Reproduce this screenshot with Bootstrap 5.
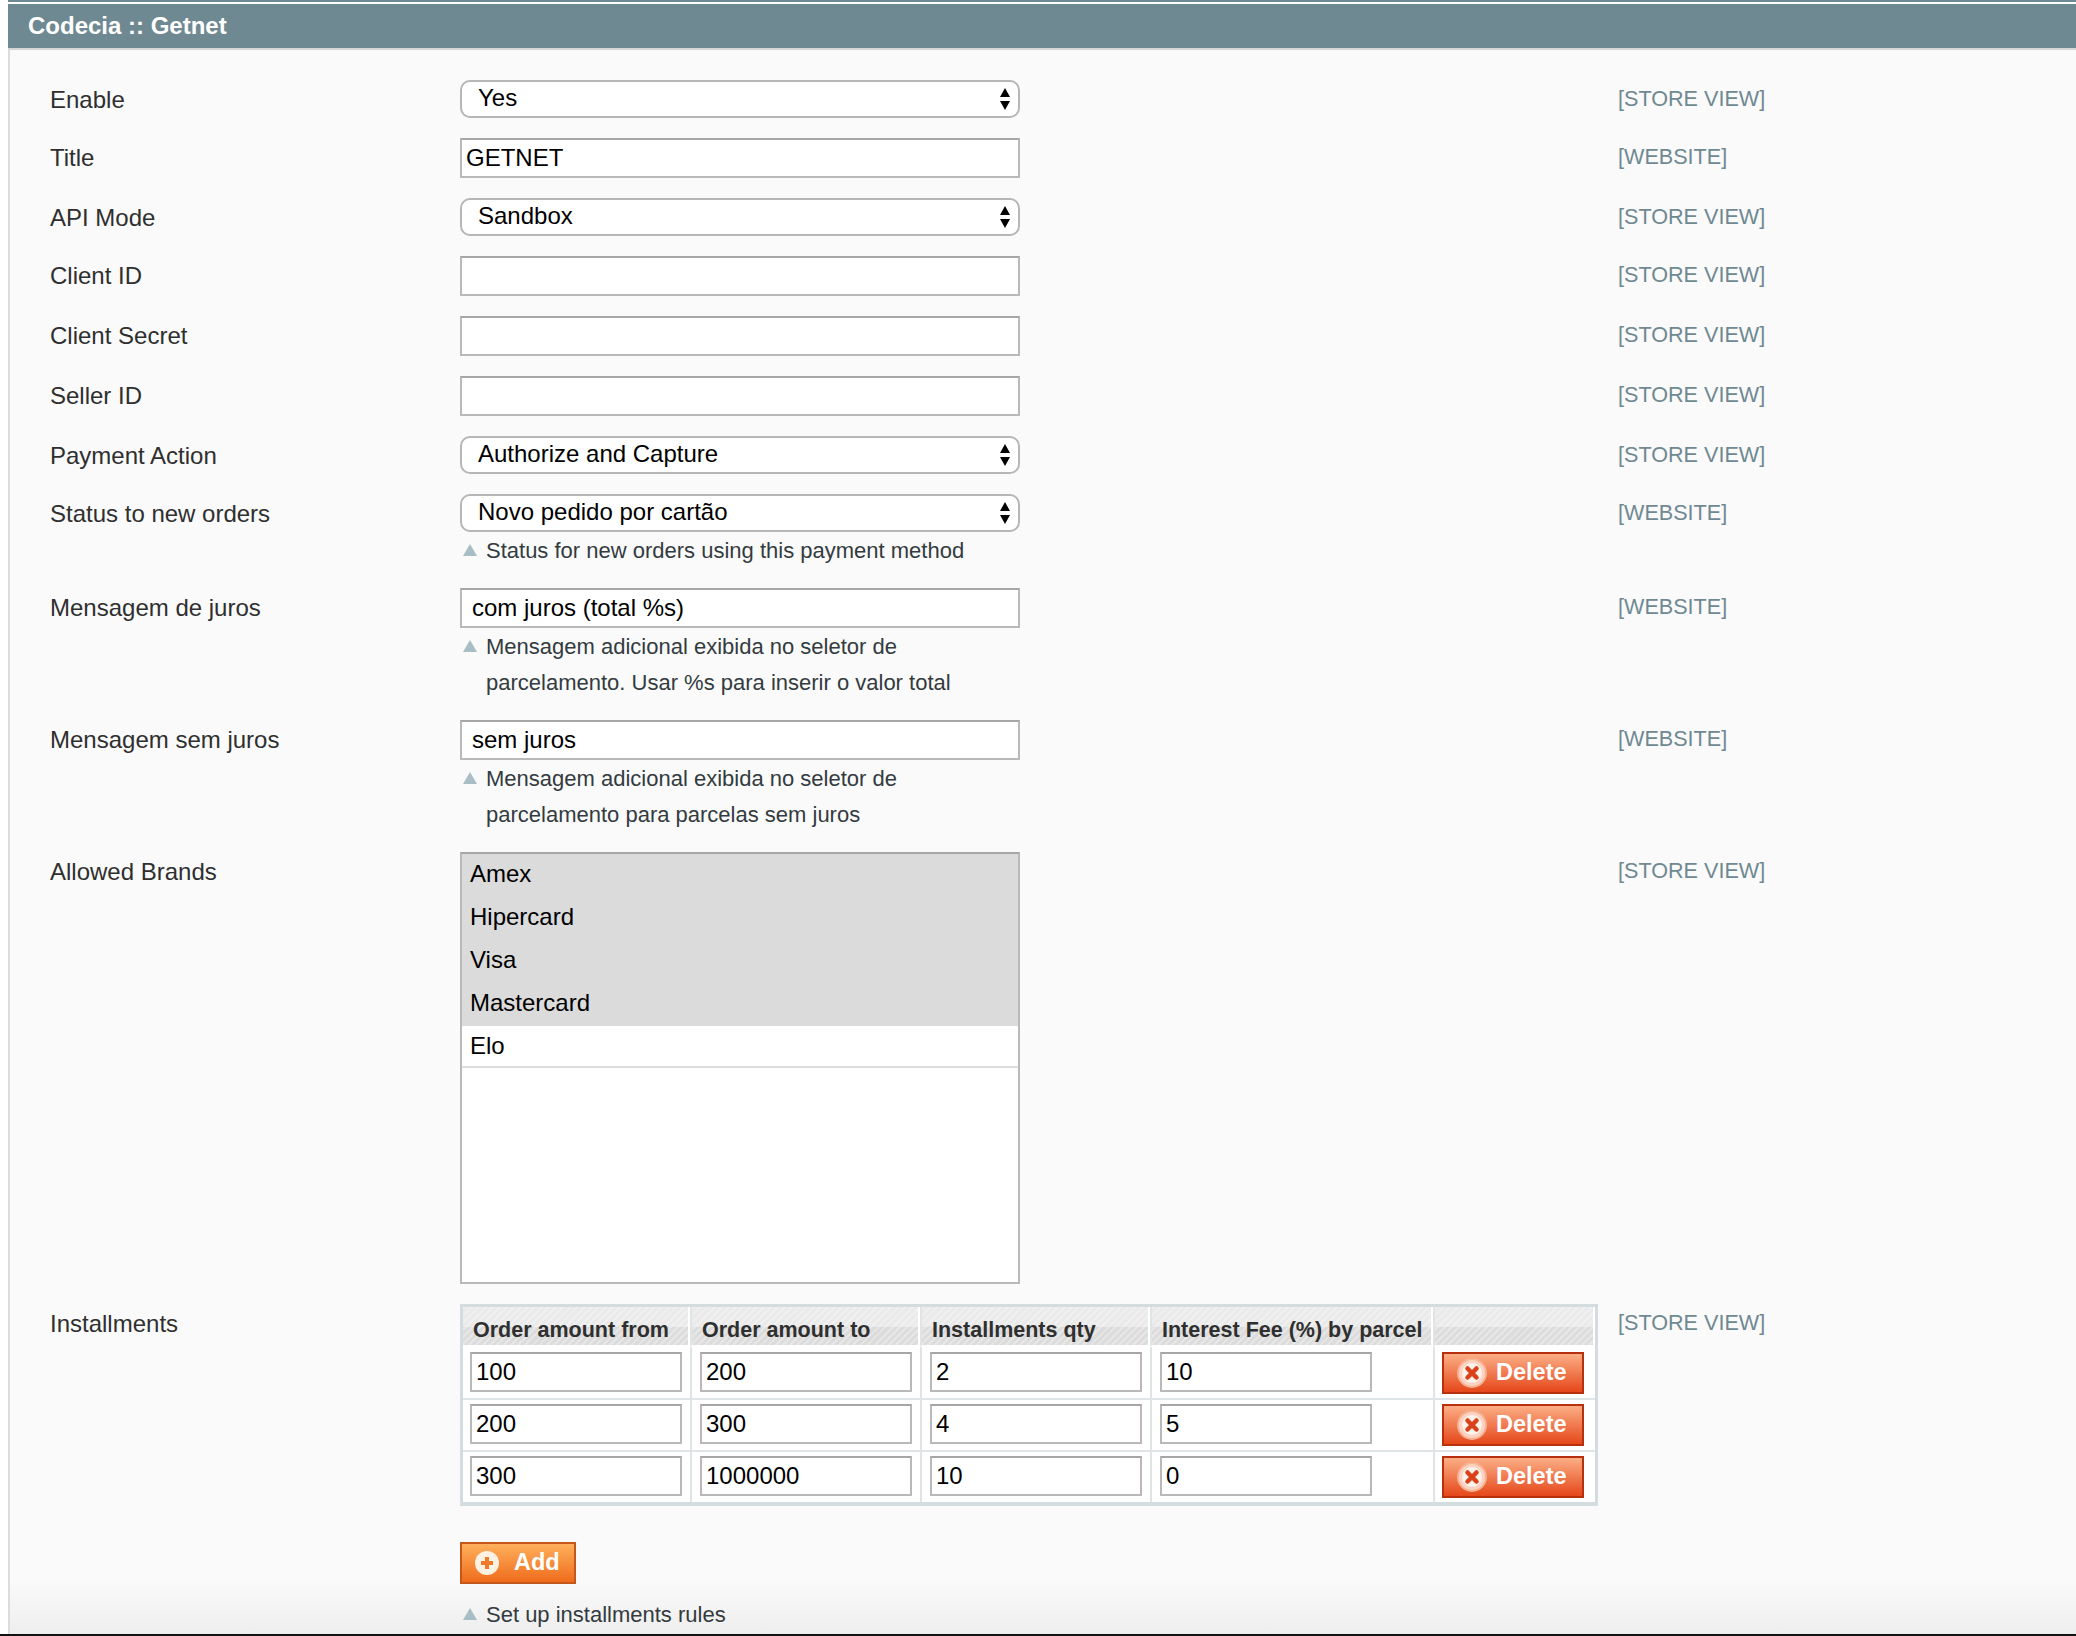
<!DOCTYPE html>
<html lang="pt">
<head>
<meta charset="utf-8">
<title>Codecia :: Getnet</title>
<link href="https://cdn.jsdelivr.net/npm/bootstrap@5.3.0/dist/css/bootstrap.min.css" rel="stylesheet">
<style>
html,body{height:100%;margin:0;background:#fff;font-family:"Liberation Sans",Arial,sans-serif;overflow:hidden}
.shell{height:1636px;padding-left:8px;display:flex;flex-direction:column;border-bottom:2px solid #111}
.topline{height:2px;background:#6f8992;margin-bottom:2px;flex:none}
.panel-head{height:44px;background:#6f8992;color:#fff;font-weight:700;font-size:24px;line-height:44px;padding-left:20px;flex:none}
.panel-body{flex:1 1 auto;min-height:0;background:linear-gradient(#fafafa 0,#fafafa 1530px,#eeeeee 100%);border-top:2px solid #d6d6d6;border-left:2px solid #dcdcdc;padding-top:30px}
.cfg-row{display:flex;margin-bottom:20px}
.cfg-label{width:450px;flex:none;padding-left:40px;font-size:24px;color:#2f2f2f}
.cfg-value{width:1138px;flex:none}
.cfg-scope{margin-left:20px;font-size:21.6px;line-height:38px;height:38px;color:#6f8992;white-space:nowrap}
.h-sel{line-height:40px;height:38px}
.h-inp{line-height:40px}
.ctl{display:flex;align-items:center;width:560px;font-size:24px;color:#000;background:#fff}
.ctl-sel{height:38px;border:2px solid #b6b6b6;border-radius:10px;padding:0 7px 2px 16px;justify-content:space-between}
.ctl-inp{height:40px;border:2px solid #b9b9b9;border-top-color:#a6a6a6;padding:0 10px}
.pad-s{padding-left:4px}
.arrows{width:12px;height:24px;flex:none;margin-top:2px;fill:#000}
.hint{display:flex;width:559px;font-size:22px;line-height:36px;color:#333b40;padding-top:1px;margin-bottom:-1px}
.hint svg{width:14px;height:12px;flex:none;margin:11px 9px 0 3px;fill:#a9bdc5}
.listbox{width:560px;height:432px;border:2px solid #b9b9b9;border-top-color:#a6a6a6;background:#fff;font-size:24px;color:#000}
.opt{height:43px;line-height:39px;padding-left:8px}
.opt-on{background:#dbdbdb}
.opt-last{height:42px;line-height:40px;border-bottom:2px solid #dcdcdc}
.grid-tbl{width:1138px;table-layout:fixed;border-collapse:separate;border-spacing:0;border:3px solid #d3dcde;border-bottom-width:4px;background:#fff}
.grid-tbl th{height:40px;padding:7px 0 0 10px;font-size:21.5px;line-height:28px;font-weight:700;color:#2f2f2f;white-space:nowrap;border-right:2px solid #fff;border-bottom:2px solid #fff;border-left:2px solid #dfe5e6;background:repeating-linear-gradient(135deg,rgba(255,255,255,.3) 0 2px,rgba(255,255,255,0) 2px 5px),linear-gradient(#eaeaea 0,#eaeaea 20px,#dcdcdc 20px,#dcdcdc 100%);vertical-align:middle}
.grid-tbl th:first-child{border-left:0;padding-left:10px}
.grid-tbl td{height:52px;padding:0;border-left:2px solid #dfe5e6;border-top:2px solid #dfe5e6;vertical-align:top}
.grid-tbl td:first-child{border-left:0}
.grid-tbl tbody tr:first-child td{border-top:0;height:51px}
.cell-in{margin:4px 0 0 8px;width:212px;height:40px;border:2px solid #b9b9b9;border-top-color:#a6a6a6;background:#fff;font-size:24px;line-height:36px;color:#000;padding-left:4px}
td:first-child .cell-in{margin-left:7px}
.tbl-1 .cell-in{margin-top:5px}
.act{display:flex;align-items:center;border:2px solid #b8300e;font-weight:700;font-size:23.5px;color:#fff;padding:0;height:42px}
.act-del{width:142px;margin:4px 0 0 7px;background:linear-gradient(#fcae86,#e5471a);padding-left:13px}
.tbl-1 .act-del{margin-top:5px}
.act-add{width:116px;margin-top:36px;background:linear-gradient(#feb05c,#ef6c1c);border-color:#c4581a;padding-left:13px}
.act svg{width:30px;height:30px;flex:none;margin-right:9px}
.act-add svg{width:24px;height:24px;margin-right:15px}
.hint-last{margin-top:12px}
</style>
</head>
<body>
<div class="shell">
  <div class="topline"></div>
  <div class="panel-head">Codecia :: Getnet</div>
  <div class="panel-body">

    <div class="cfg-row">
      <div class="cfg-label h-sel">Enable</div>
      <div class="cfg-value"><div class="ctl ctl-sel"><span>Yes</span><svg class="arrows" viewBox="0 0 12 24"><path d="M6 1 11 10H1zM1 14H11L6 23z"/></svg></div></div>
      <div class="cfg-scope">[STORE VIEW]</div>
    </div>
    <div class="cfg-row">
      <div class="cfg-label h-inp">Title</div>
      <div class="cfg-value"><div class="ctl ctl-inp pad-s">GETNET</div></div>
      <div class="cfg-scope">[WEBSITE]</div>
    </div>
    <div class="cfg-row">
      <div class="cfg-label h-sel">API Mode</div>
      <div class="cfg-value"><div class="ctl ctl-sel"><span>Sandbox</span><svg class="arrows" viewBox="0 0 12 24"><path d="M6 1 11 10H1zM1 14H11L6 23z"/></svg></div></div>
      <div class="cfg-scope">[STORE VIEW]</div>
    </div>
    <div class="cfg-row">
      <div class="cfg-label h-inp">Client ID</div>
      <div class="cfg-value"><div class="ctl ctl-inp"></div></div>
      <div class="cfg-scope">[STORE VIEW]</div>
    </div>
    <div class="cfg-row">
      <div class="cfg-label h-inp">Client Secret</div>
      <div class="cfg-value"><div class="ctl ctl-inp"></div></div>
      <div class="cfg-scope">[STORE VIEW]</div>
    </div>
    <div class="cfg-row">
      <div class="cfg-label h-inp">Seller ID</div>
      <div class="cfg-value"><div class="ctl ctl-inp"></div></div>
      <div class="cfg-scope">[STORE VIEW]</div>
    </div>
    <div class="cfg-row">
      <div class="cfg-label h-sel">Payment Action</div>
      <div class="cfg-value"><div class="ctl ctl-sel"><span>Authorize and Capture</span><svg class="arrows" viewBox="0 0 12 24"><path d="M6 1 11 10H1zM1 14H11L6 23z"/></svg></div></div>
      <div class="cfg-scope">[STORE VIEW]</div>
    </div>
    <div class="cfg-row">
      <div class="cfg-label h-sel">Status to new orders</div>
      <div class="cfg-value">
        <div class="ctl ctl-sel"><span>Novo pedido por cartão</span><svg class="arrows" viewBox="0 0 12 24"><path d="M6 1 11 10H1zM1 14H11L6 23z"/></svg></div>
        <div class="hint"><svg viewBox="0 0 14 12"><path d="M7 0 14 12H0z"/></svg><span>Status for new orders using this payment method</span></div>
      </div>
      <div class="cfg-scope">[WEBSITE]</div>
    </div>
    <div class="cfg-row">
      <div class="cfg-label h-inp">Mensagem de juros</div>
      <div class="cfg-value">
        <div class="ctl ctl-inp">com juros (total %s)</div>
        <div class="hint"><svg viewBox="0 0 14 12"><path d="M7 0 14 12H0z"/></svg><span>Mensagem adicional exibida no seletor de parcelamento. Usar %s para inserir o valor total</span></div>
      </div>
      <div class="cfg-scope">[WEBSITE]</div>
    </div>
    <div class="cfg-row">
      <div class="cfg-label h-inp">Mensagem sem juros</div>
      <div class="cfg-value">
        <div class="ctl ctl-inp">sem juros</div>
        <div class="hint"><svg viewBox="0 0 14 12"><path d="M7 0 14 12H0z"/></svg><span>Mensagem adicional exibida no seletor de parcelamento para parcelas sem juros</span></div>
      </div>
      <div class="cfg-scope">[WEBSITE]</div>
    </div>
    <div class="cfg-row">
      <div class="cfg-label h-inp">Allowed Brands</div>
      <div class="cfg-value">
        <div class="listbox">
          <div class="opt opt-on">Amex</div>
          <div class="opt opt-on">Hipercard</div>
          <div class="opt opt-on">Visa</div>
          <div class="opt opt-on">Mastercard</div>
          <div class="opt opt-last">Elo</div>
        </div>
      </div>
      <div class="cfg-scope">[STORE VIEW]</div>
    </div>
    <div class="cfg-row">
      <div class="cfg-label h-inp">Installments</div>
      <div class="cfg-value">
        <table class="grid-tbl">
          <colgroup><col style="width:227px"><col style="width:230px"><col style="width:230px"><col style="width:283px"><col></colgroup>
          <thead><tr><th>Order amount from</th><th>Order amount to</th><th>Installments qty</th><th>Interest Fee (%) by parcel</th><th></th></tr></thead>
          <tbody>
            <tr class="tbl-1"><td><div class="cell-in">100</div></td><td><div class="cell-in">200</div></td><td><div class="cell-in">2</div></td><td><div class="cell-in">10</div></td><td><div class="act act-del"><svg viewBox="0 0 30 30"><circle cx="15" cy="15" r="14" fill="#fbd3c0" stroke="#f6b193" stroke-width="2"/><circle cx="15" cy="15" r="10" fill="#fff2ea"/><path d="M10.5 10.5 19.5 19.5M19.5 10.5 10.5 19.5" stroke="#d9421a" stroke-width="4.5" stroke-linecap="round"/></svg>Delete</div></td></tr>
            <tr><td><div class="cell-in">200</div></td><td><div class="cell-in">300</div></td><td><div class="cell-in">4</div></td><td><div class="cell-in">5</div></td><td><div class="act act-del"><svg viewBox="0 0 30 30"><circle cx="15" cy="15" r="14" fill="#fbd3c0" stroke="#f6b193" stroke-width="2"/><circle cx="15" cy="15" r="10" fill="#fff2ea"/><path d="M10.5 10.5 19.5 19.5M19.5 10.5 10.5 19.5" stroke="#d9421a" stroke-width="4.5" stroke-linecap="round"/></svg>Delete</div></td></tr>
            <tr><td><div class="cell-in">300</div></td><td><div class="cell-in">1000000</div></td><td><div class="cell-in">10</div></td><td><div class="cell-in">0</div></td><td><div class="act act-del"><svg viewBox="0 0 30 30"><circle cx="15" cy="15" r="14" fill="#fbd3c0" stroke="#f6b193" stroke-width="2"/><circle cx="15" cy="15" r="10" fill="#fff2ea"/><path d="M10.5 10.5 19.5 19.5M19.5 10.5 10.5 19.5" stroke="#d9421a" stroke-width="4.5" stroke-linecap="round"/></svg>Delete</div></td></tr>
          </tbody>
        </table>
        <div class="act act-add"><svg viewBox="0 0 24 24"><circle cx="12" cy="12" r="12" fill="#fff1e2"/><path d="M12 6V18M6 12H18" stroke="#f0792a" stroke-width="4"/></svg>Add</div>
        <div class="hint hint-last"><svg viewBox="0 0 14 12"><path d="M7 0 14 12H0z"/></svg><span>Set up installments rules</span></div>
      </div>
      <div class="cfg-scope">[STORE VIEW]</div>
    </div>

  </div>
</div>
<script src="https://cdn.jsdelivr.net/npm/bootstrap@5.3.0/dist/js/bootstrap.bundle.min.js"></script>
</body>
</html>
